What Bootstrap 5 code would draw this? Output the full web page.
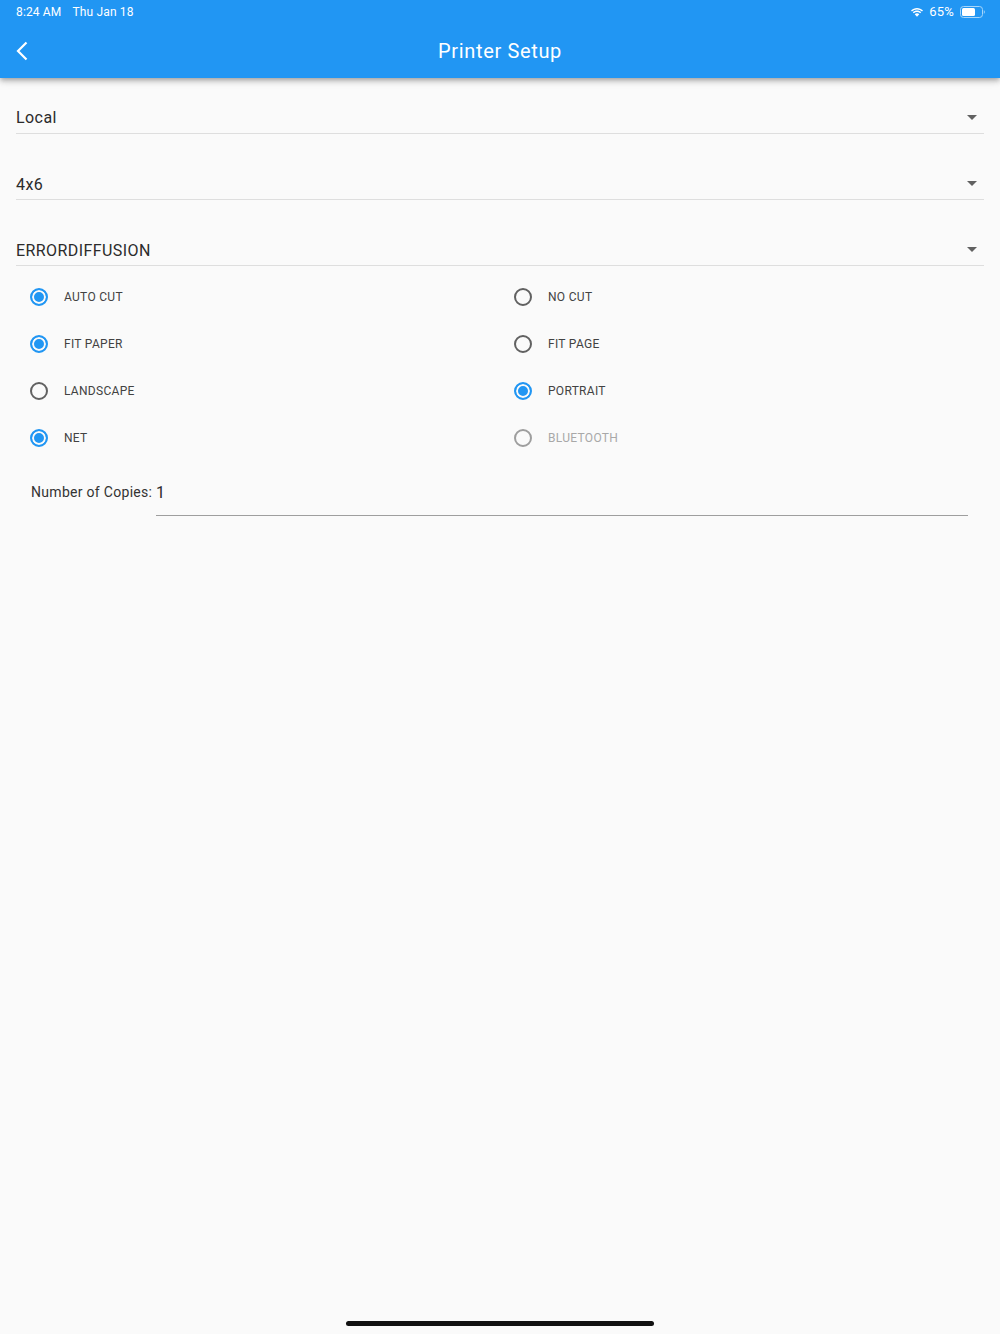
<!DOCTYPE html>
<html lang="en">
<head>
<meta charset="utf-8">
<title>Printer Setup</title>
<link href="https://cdn.jsdelivr.net/npm/bootstrap@5.3.0/dist/css/bootstrap.min.css" rel="stylesheet">
<style>
html,body{height:100%}
body{background:#fafafa;font-family:Roboto,"Liberation Sans",sans-serif;color:#212121;height:1334px;overflow:hidden}
.app-top{background:#2196f3;height:78px;color:#fff;box-shadow:0 2px 4px -1px rgba(0,0,0,.2),0 4px 5px 0 rgba(0,0,0,.14),0 1px 10px 0 rgba(0,0,0,.12)}
.stat-bar{height:24px;padding:0 15px 0 16px;font-size:12px;letter-spacing:.15px;color:#fff}
.stat-date{margin-left:11px}
.stat-pct{margin:0 6px 0 5px;font-size:13px;letter-spacing:.2px}
.tool-bar{height:54px;padding:0 16px}
.tool-title{font-size:20px;font-weight:400;letter-spacing:.65px;margin:0}
.back-btn{left:16px;top:50%;transform:translateY(-50%);line-height:0}
.pick-list{padding:0 16px}
.pick-row{height:66px;border-bottom:1px solid #dedede;font-size:16px;letter-spacing:.42px;padding-right:7px;padding-bottom:2px}
.pick-row span{color:#2b2b2b}
.caret-dn{width:0;height:0;margin-bottom:11px;border-left:5px solid transparent;border-right:5px solid transparent;border-top:5px solid #616161}
.first-pick{height:56px;padding-bottom:3px}
.first-pick .caret-dn{margin-bottom:10px}
.opt-grid{padding:7px 16px 0}
.opt-item{height:47px;font-size:12px;letter-spacing:.3px;color:#424242}
.opt-dot{width:18px;height:18px;border-radius:50%;border:2px solid #616161;margin-left:14px;margin-right:16px;flex:none}
.opt-dot.on{border-color:#2196f3;background:#2196f3;box-shadow:inset 0 0 0 2px #fafafa}
.opt-item.off{color:#a8a8a8}
.opt-item.off .opt-dot{border-color:#9e9e9e}
.copy-row{padding:7px 0 0 31px;font-size:14px;letter-spacing:.3px;color:#333}
.copy-label{padding-top:14px;width:125px;flex:none}
.copy-val{width:812px;height:48px;border-bottom:1px solid #9e9e9e;padding-top:13px;font-size:16px;color:#2b2b2b}
.home-bar{left:346px;bottom:8px;width:308px;height:5px;background:#111;border-radius:3px}
</style>
</head>
<body class="position-relative">
<header class="app-top position-relative">
  <div class="stat-bar d-flex align-items-center justify-content-between">
    <div><span>8:24 AM</span><span class="stat-date">Thu Jan 18</span></div>
    <div class="d-flex align-items-center">
      <svg width="14" height="11" viewBox="0 0 14 11" fill="#fff"><path d="M7 2.6c1.900 0 3.700.7 5 2l1-1.100C11.400 1.900 9.300 1 7 1S2.600 1.900 1 3.500l1 1.100c1.300-1.300 3.100-2 5-2z"/><path d="M7 5.100c1.200 0 2.300.5 3.200 1.200l1-1.100C10.100 4.200 8.600 3.600 7 3.600s-3.100.6-4.200 1.600l1 1.100c.9-.7 2-1.200 3.200-1.200z"/><path d="M7 6.300c-.9 0-1.700.3-2.300.9L7 9.800l2.300-2.600c-.6-.6-1.400-.9-2.300-.9z"/></svg>
      <span class="stat-pct">65%</span>
      <svg width="25" height="12" viewBox="0 0 25 12"><rect x=".5" y=".5" width="22" height="11" rx="3" fill="none" stroke="#a6d5fa"/><rect x="2" y="2" width="13" height="8" rx="1.500" fill="#fff"/><path d="M23.800 4.300c.7.200 1 .9 1 1.700s-.3 1.500-1 1.700z" fill="#a6d5fa"/></svg>
    </div>
  </div>
  <div class="tool-bar position-relative d-flex align-items-center justify-content-center">
    <a class="back-btn position-absolute" href="#" aria-label="Back"><svg width="12" height="20" viewBox="0 0 12 20" fill="none" stroke="#fff" stroke-width="2.200"><path d="M10.500 1.500 2 10l8.500 8.500"/></svg></a>
    <h1 class="tool-title">Printer Setup</h1>
  </div>
</header>
<main>
  <div class="pick-list">
    <div class="pick-row first-pick d-flex align-items-end justify-content-between"><span>Local</span><i class="caret-dn"></i></div>
    <div class="pick-row d-flex align-items-end justify-content-between"><span>4x6</span><i class="caret-dn"></i></div>
    <div class="pick-row d-flex align-items-end justify-content-between"><span>ERRORDIFFUSION</span><i class="caret-dn"></i></div>
  </div>
  <div class="row g-0 opt-grid">
    <div class="col-6 opt-item d-flex align-items-center"><i class="opt-dot on"></i>AUTO CUT</div>
    <div class="col-6 opt-item d-flex align-items-center"><i class="opt-dot"></i>NO CUT</div>
    <div class="col-6 opt-item d-flex align-items-center"><i class="opt-dot on"></i>FIT PAPER</div>
    <div class="col-6 opt-item d-flex align-items-center"><i class="opt-dot"></i>FIT PAGE</div>
    <div class="col-6 opt-item d-flex align-items-center"><i class="opt-dot"></i>LANDSCAPE</div>
    <div class="col-6 opt-item d-flex align-items-center"><i class="opt-dot on"></i>PORTRAIT</div>
    <div class="col-6 opt-item d-flex align-items-center"><i class="opt-dot on"></i>NET</div>
    <div class="col-6 opt-item off d-flex align-items-center"><i class="opt-dot"></i>BLUETOOTH</div>
  </div>
  <div class="copy-row d-flex">
    <div class="copy-label">Number of Copies:</div>
    <div class="copy-val">1</div>
  </div>
</main>
<div class="home-bar position-absolute"></div>
<script src="https://cdn.jsdelivr.net/npm/bootstrap@5.3.0/dist/js/bootstrap.bundle.min.js"></script>
</body>
</html>
